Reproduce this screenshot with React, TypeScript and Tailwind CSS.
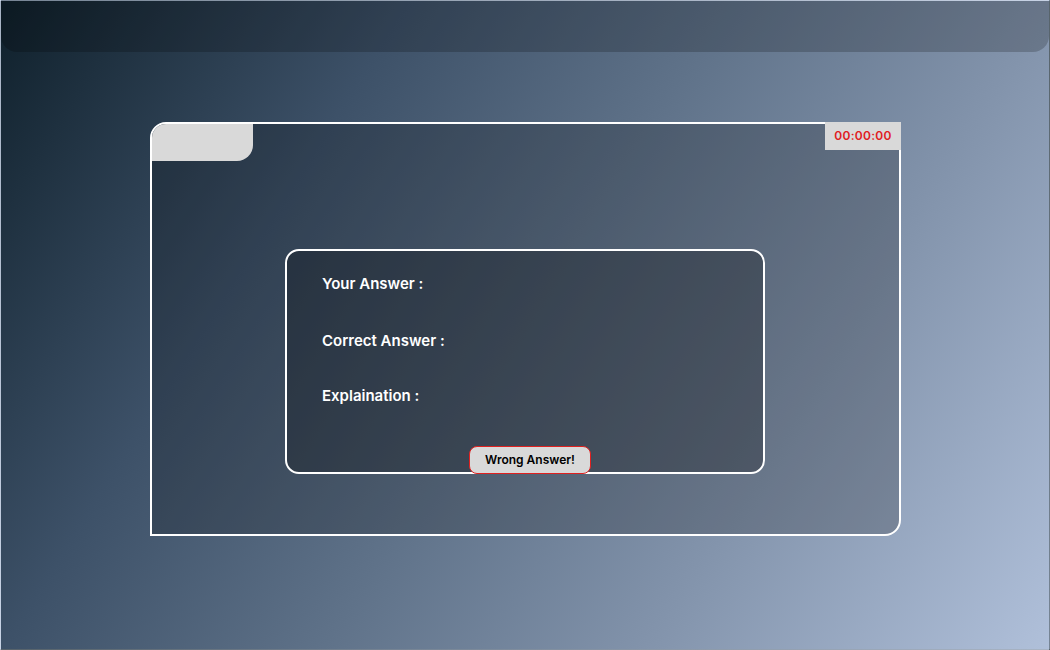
import React from "react";

export default function App() {
  return (
    <div
      className="relative w-[1050px] h-[650px] overflow-hidden border border-white/30 bg-[linear-gradient(122deg,#0f202b_0%,#3d5168_28%,#5f7289_50%,#8293ab_72%,#b0c0da_100%)]"
      style={{ fontFamily: "Inter, 'Noto Sans', sans-serif" }}
    >
      <div className="h-[51px] w-full rounded-b-[16px] bg-black/20" />
      <div className="pl-[149px] pt-[70px]">
        <div className="relative w-[751px] h-[414px] border-2 border-white rounded-tl-[16px] rounded-br-[16px] bg-black/20">
          <div className="absolute left-0 top-0 w-[101px] h-[37px] bg-[#d9d9d9] rounded-tl-[14px] rounded-br-[16px]" />
          <div className="absolute right-[-2px] top-[-2px] w-[76px] h-[28px] bg-[#d9d9d9] flex items-center justify-center text-[12px] font-semibold text-[#e0201f] tracking-[0.3px]">
            00:00:00
          </div>
          <div className="pl-[133px] pt-[125px]">
            <div className="relative w-[480px] h-[225px] border-2 border-white rounded-[14px] bg-black/25 pl-[35px] pt-[22px]">
              <div className="flex flex-col text-white text-[15px] font-semibold">
                <div className="h-[57px]">Your Answer :</div>
                <div className="h-[55px]">Correct Answer :</div>
                <div>Explaination :</div>
              </div>
              <div className="absolute left-[182px] bottom-[-2px] w-[122px] h-[28px] rounded-[8px] border border-[#e0201f] bg-[#d9d9d9] flex items-center justify-center text-[12px] font-semibold text-black">
                Wrong Answer!
              </div>
            </div>
          </div>
        </div>
      </div>
    </div>
  );
}
